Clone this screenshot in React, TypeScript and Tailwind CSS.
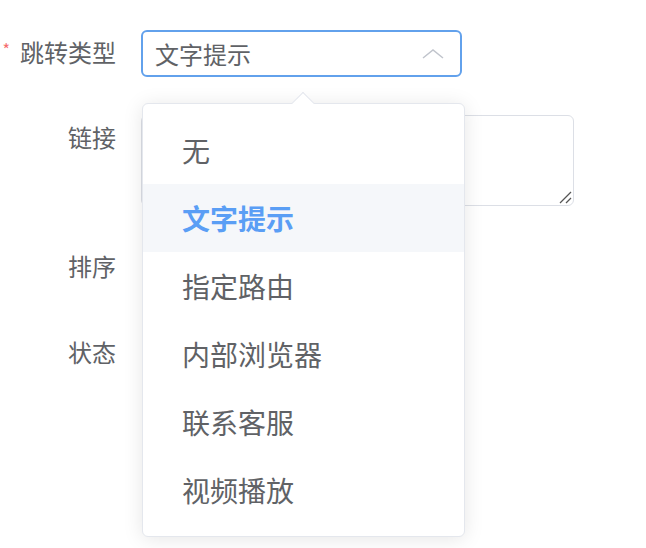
const options = ['无', '文字提示', '指定路由', '内部浏览器', '联系客服', '视频播放'];

const font = "font-['Noto_Sans_CJK_SC','Noto_Sans',sans-serif]";

function Label({ text, required }: { text: string; required?: boolean }) {
  return (
    <div className="flex h-[46px] w-[116px] shrink-0 items-center justify-end pb-[3px] text-[24px] text-[#606266]">
      {required && <span className="mr-[10px] mt-[-6px] text-[16px] text-[#f56c6c]">*</span>}
      {text}
    </div>
  );
}

function ChevronUp() {
  return (
    <svg width="24" height="12" viewBox="0 0 24 12" fill="none">
      <polyline points="2,10 12,2 22,10" stroke="#c0c4cc" strokeWidth="1.5" />
    </svg>
  );
}

export default function App() {
  return (
    <div className={`relative h-[548px] w-[646px] overflow-hidden bg-white ${font}`}>
      <div className="flex flex-col pt-[30px]">
        {/* 跳转类型 */}
        <div className="flex items-start gap-[25px]">
          <Label text="跳转类型" required />
          <div className="flex h-[47px] w-[321px] items-center justify-between rounded-[6px] border-2 border-[#62a1ec] pl-[12px] pr-[15px] text-[24px] text-[#606266]">
            <span>文字提示</span>
            <ChevronUp />
          </div>
        </div>

        {/* 链接 */}
        <div className="mt-[38px] flex items-start gap-[25px]">
          <Label text="链接" />
          <div className="relative h-[91px] w-[433px] rounded-[6px] border border-[#dcdfe6]">
            <svg className="absolute bottom-[1px] right-[1px]" width="14" height="14" viewBox="0 0 14 14">
              <line x1="2" y1="13" x2="13" y2="2" stroke="#555" strokeWidth="1.2" />
              <line x1="8" y1="13" x2="13" y2="8" stroke="#555" strokeWidth="1.2" />
            </svg>
          </div>
        </div>

        {/* 排序 */}
        <div className="mt-[38px] flex items-start gap-[25px]">
          <Label text="排序" />
          <div className="h-[46px] w-[320px]" />
        </div>

        {/* 状态 */}
        <div className="mt-[40px] flex items-start gap-[25px]">
          <Label text="状态" />
        </div>
      </div>

      {/* dropdown popper */}
      <div className="absolute left-[142px] top-[103px] w-[323px] rounded-[6px] border border-[#e4e7ed] bg-white py-[12px] shadow-[0_2px_20px_0_rgba(0,0,0,0.1)]">
        <div className="absolute left-[152px] top-[-9px] h-[16px] w-[16px] rotate-45 border-l border-t border-[#e4e7ed] bg-white" />
        {options.map((o) => (
          <div
            key={o}
            className={`flex h-[68px] items-center px-[39px] text-[28px] ${
              o === '文字提示' ? 'bg-[#f5f7fa] font-bold text-[#5a9ef5]' : 'text-[#606266]'
            }`}
          >
            {o}
          </div>
        ))}
      </div>
    </div>
  );
}
